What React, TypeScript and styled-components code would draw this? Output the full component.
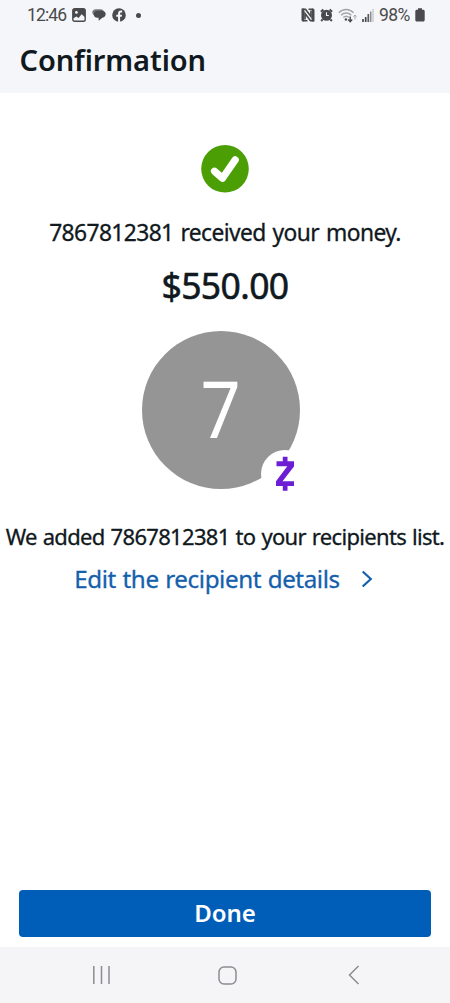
import React from "react";
import styled, { createGlobalStyle } from "styled-components";

const GlobalStyle = createGlobalStyle`
  * { box-sizing: border-box; }
  body { margin: 0; background: #fff; }
`;

const Screen = styled.div`
  width: 450px;
  height: 1003px;
  display: flex;
  flex-direction: column;
  overflow: hidden;
  background: #ffffff;
  color: #101820;
  font-family: "Noto Sans", "Open Sans", sans-serif;
`;

const Header = styled.header`
  height: 93px;
  flex: none;
  background: #f5f6f9;
`;

const StatusBar = styled.div`
  height: 30px;
  display: flex;
  justify-content: space-between;
  padding: 0 25.5px 0 27px;
  color: #4a4a4c;
  font-family: Roboto, sans-serif;
  font-size: 17.5px;
  line-height: 30px;
`;

const StatusGroup = styled.div<{ $gap: number }>`
  display: flex;
  align-items: center;
  gap: ${(p) => p.$gap}px;
  svg { display: block; flex: none; }
`;

const StatusText = styled.span<{ $spacing: number }>`
  letter-spacing: ${(p) => p.$spacing}px;
  white-space: nowrap;
`;

const Title = styled.h1`
  margin: 11px 0 0 19.5px;
  font-size: 29px;
  line-height: 38px;
  font-weight: 600;
  letter-spacing: -0.1px;
  white-space: nowrap;
`;

const Main = styled.main`
  flex: 1;
  display: flex;
  flex-direction: column;
  align-items: center;
  padding-top: 52px;
`;

const SuccessIcon = styled.svg`
  display: block;
  flex: none;
`;

const Line = styled.p<{ $size: number; $top: number; $stroke: number; $spacing: number; $word?: number }>`
  margin: ${(p) => p.$top}px 0 0;
  font-size: ${(p) => p.$size}px;
  line-height: 32px;
  letter-spacing: ${(p) => p.$spacing}px;
  word-spacing: ${(p) => p.$word ?? 0}px;
  -webkit-text-stroke: ${(p) => p.$stroke}px currentColor;
  white-space: nowrap;
`;

const Avatar = styled.div`
  position: relative;
  width: 158px;
  height: 158px;
  margin: 30.5px 8px 0 0;
  border-radius: 50%;
  background: #959595;
  display: flex;
  justify-content: center;
  color: #fff;
  font-size: 79px;
  line-height: 153px;
`;

const Initial = styled.span`
  transform: scaleX(0.89);
`;

const Badge = styled.span`
  position: absolute;
  left: 118.5px;
  top: 118.5px;
  width: 48px;
  height: 48px;
  border-radius: 50%;
  background: #fff;
  svg { display: block; }
`;

const EditLink = styled.a`
  display: flex;
  align-items: center;
  gap: 21px;
  margin: 11px 0 0 -3px;
  color: #1560ac;
  font-size: 24.2px;
  line-height: 32px;
  letter-spacing: -0.4px;
  word-spacing: 0.7px;
  -webkit-text-stroke: 0.3px currentColor;
  white-space: nowrap;
`;

const DoneButton = styled.button`
  width: 412px;
  height: 46.5px;
  margin: auto 0 10.5px;
  padding: 0;
  border: 0;
  border-radius: 4px;
  background: #005eb8;
  color: #fff;
  font: 600 24px/46px "Noto Sans", sans-serif;
`;

const DoneLabel = styled.span`
  display: block;
  height: 46px;
  line-height: 45px;
  margin-top: -1px;
`;

const NavBar = styled.nav`
  height: 56px;
  flex: none;
  display: flex;
  align-items: center;
  justify-content: space-between;
  padding: 0 90px 0 92px;
  background: #f5f5f8;
  svg { display: block; }
`;

const HomeIcon = styled.svg`
  margin-right: 5px;
`;

const PictureIcon = () => (
  <svg width="14" height="14" viewBox="0 0 14 14">
    <rect x="0.8" y="0.8" width="12.4" height="12.4" rx="1.8" fill="none" stroke="#4a4a4c" strokeWidth="1.4" />
    <path d="M1 1h12v8.3L9.6 6.300 6.6 10.1 4.4 8.4 1 10.500z" fill="#4a4a4c" />
    <circle cx="4.4" cy="4.4" r="1.4" fill="#f5f6f9" />
  </svg>
);

const ChatIcon = () => (
  <svg width="14" height="14" viewBox="0 0 14 14">
    <path d="M3.6 1.2h4.8c2 0 3 .9 3.2 2H6C3.600 3.200 2.800 5 3 7.500 1.200 7 .3 5.800.3 4.300c0-1.800 1.500-3.100 3.300-3.100z" fill="#77777a" />
    <path d="M5.200 2.700h4.800c2.200 0 3.700 1.500 3.700 3.400S12.300 9.500 10.400 9.700L6.600 12.800V9.700H5.200C3.100 9.700 1.700 8.100 1.700 6.200s1.400-3.500 3.500-3.500z" fill="#4a4a4c" />
  </svg>
);

const FacebookIcon = () => (
  <svg width="14" height="14" viewBox="0 0 14 14">
    <circle cx="7" cy="7" r="6.8" fill="#4a4a4c" />
    <path d="M6.1 14V8.700H4.300V6.700h1.800V5.400c0-1.900 1-2.900 2.700-2.900h1.400v1.900H9.200c-.8 0-1.100.4-1.100 1.100v1.200H10l-.3 2H8.100V14z" fill="#f5f6f9" />
  </svg>
);

const NfcIcon = () => (
  <svg width="14" height="14" viewBox="0 0 14 14">
    <path d="M1.500 1.350H4.500L10 8.500V2.500M12.500 12.650H9.500L4 5.500v6" fill="none" stroke="#4a4a4c" strokeWidth="1.700" />
    <path d="M.5.500h2.700v13H2A1.500 1.500 0 0 1 .5 12zM13.500 13.500h-2.700V.500H12A1.500 1.500 0 0 1 13.500 2z" fill="#4a4a4c" />
    <path d="M7.500.5H12v1.500H7.500zM2 12h4.500v1.500H2z" fill="#4a4a4c" />
  </svg>
);

const AlarmIcon = () => (
  <svg width="13" height="14" viewBox="0 0 13 14">
    <circle cx="6.500" cy="7.300" r="5.500" fill="#4a4a4c" />
    <path d="M.9 3.800L3.400 1.500M12.100 3.800L9.600 1.500M2.600 11.300L1.200 13M10.400 11.300L11.800 13" stroke="#4a4a4c" strokeWidth="2" />
    <path d="M6.500 4.200v3.300h2.300" stroke="#f5f6f9" strokeWidth="1.100" fill="none" />
  </svg>
);

const WifiIcon = () => (
  <svg width="19" height="15" viewBox="0 0 19 15">
    <g fill="none" stroke="#a5a5a9" strokeWidth="1.400">
      <path d="M.8 4.800C4.800.4 11.500.4 15.500 4.800" />
      <path d="M3 7.200c3-3 7.500-3 10.300 0" />
      <path d="M5.300 9.600c1.800-1.600 4-1.600 5.700 0" />
      <path d="M17 11.500V7M15.400 8.600L17 7l1.600 1.600" strokeWidth="1" />
    </g>
    <circle cx="7.900" cy="11.500" r="1.200" fill="#4a4a4c" />
    <path d="M12.200 8.500v5M10.200 11.500l2 2.200 2-2.200" stroke="#4a4a4c" strokeWidth="1.400" fill="none" />
  </svg>
);

const SignalIcon = () => (
  <svg width="12" height="13" viewBox="0 0 12 13">
    <path d="M1 10v3M3.700 8v5" stroke="#4a4a4c" strokeWidth="1.700" />
    <path d="M6.300 5v8" stroke="#5c5c60" strokeWidth="1.700" />
    <path d="M8.700 2.500V13" stroke="#8c8c90" strokeWidth="1.500" />
    <path d="M11 0v13" stroke="#c4c4c8" strokeWidth="1.300" />
  </svg>
);

const BatteryIcon = () => (
  <svg width="10" height="14" viewBox="0 0 10 14">
    <path d="M3 .3h4v1.500h1.200c.9 0 1.500.6 1.500 1.500v8.700c0 .9-.6 1.500-1.500 1.500H1.800C.9 13.500.3 12.900.3 12V3.300c0-.9.6-1.500 1.500-1.500H3z" fill="#4a4a4c" />
  </svg>
);

const Dot = styled.i`
  width: 5px;
  height: 5px;
  margin-left: 4px;
  border-radius: 50%;
  background: #4a4a4c;
`;

export default function App() {
  return (
    <Screen>
      <GlobalStyle />
      <Header>
        <StatusBar>
          <StatusGroup $gap={6}>
            <StatusText $spacing={-0.85}>12:46</StatusText>
            <PictureIcon />
            <ChatIcon />
            <FacebookIcon />
            <Dot />
          </StatusGroup>
          <StatusGroup $gap={5}>
            <NfcIcon />
            <AlarmIcon />
            <WifiIcon />
            <SignalIcon />
            <StatusText $spacing={-0.7}>98%</StatusText>
            <BatteryIcon />
          </StatusGroup>
        </StatusBar>
        <Title>Confirmation</Title>
      </Header>
      <Main>
        <SuccessIcon width="48" height="48" viewBox="0 0 48 48">
          <circle cx="24" cy="23.800" r="23.800" fill="#4b9f04" />
          <path d="M13.500 26.200L21.500 33.300L34.200 14.900" fill="none" stroke="#fff" strokeWidth="7.200" strokeLinecap="round" strokeLinejoin="round" />
        </SuccessIcon>
        <Line $size={22.8} $top={24} $stroke={0.3} $spacing={-0.6} $word={1.6}>7867812381 received your money.</Line>
        <Line $size={35.5} $top={19.5} $stroke={0.6} $spacing={-0.6}>$550.00</Line>
        <Avatar>
          <Initial>7</Initial>
          <Badge>
            <svg width="48" height="48" viewBox="0 0 48 48">
              <path d="M21.800 6.800h4.700v4.500H33v5.200L21.500 31.300H33v4.700h-6.500v4.700h-4.700V36H15v-4.700L26.300 16.300H15.500v-5h6.300z" fill="#6d1ed4" />
            </svg>
          </Badge>
        </Avatar>
        <Line $size={22} $top={30.5} $stroke={0.3} $spacing={-0.68} $word={0.9}>We added 7867812381 to your recipients list.</Line>
        <EditLink>
          Edit the recipient details
          <svg width="12" height="18" viewBox="0 0 12 18">
            <path d="M1.700 1.500L9.800 9L1.700 16.500" fill="none" stroke="#1560ac" strokeWidth="2.200" />
          </svg>
        </EditLink>
        <DoneButton><DoneLabel>Done</DoneLabel></DoneButton>
      </Main>
      <NavBar>
        <svg width="19" height="18" viewBox="0 0 19 18">
          <path d="M1.800 0v18M9.500 0v18M17 0v18" stroke="#8d8d91" strokeWidth="1.500" />
        </svg>
        <HomeIcon width="19" height="19" viewBox="0 0 19 19">
          <rect x="1" y="1" width="17" height="17" rx="5" fill="none" stroke="#8d8d91" strokeWidth="1.500" />
        </HomeIcon>
        <svg width="12" height="20" viewBox="0 0 12 20">
          <path d="M10.500 1L1.500 10l9 9" fill="none" stroke="#8d8d91" strokeWidth="1.500" />
        </svg>
      </NavBar>
    </Screen>
  );
}
